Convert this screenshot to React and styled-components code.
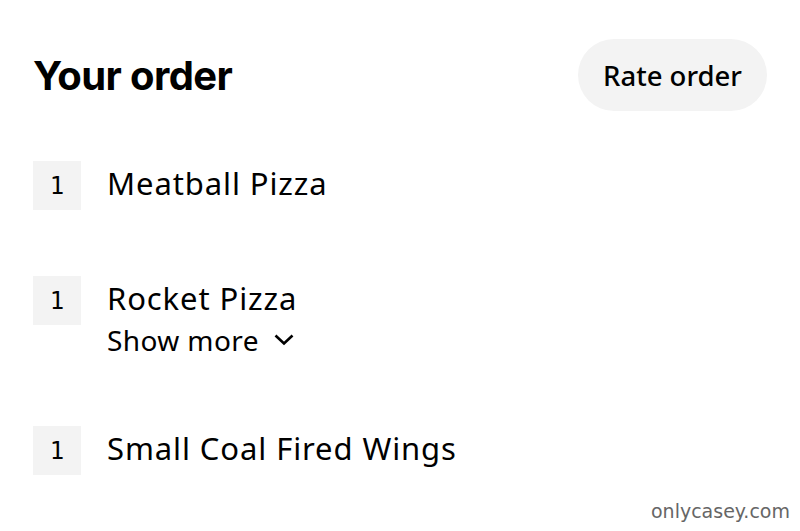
import React from "react";
import styled, { createGlobalStyle } from "styled-components";

const GlobalStyle = createGlobalStyle`
  html, body {
    margin: 0;
    padding: 0;
    background: #fff;
  }
  body {
    font-family: "Noto Sans", "Open Sans", sans-serif;
    color: #000;
  }
`;

const Page = styled.div`
  position: relative;
  width: 800px;
  height: 531px;
  padding: 39px 33px 0 33px;
  box-sizing: border-box;
`;

const Header = styled.div`
  display: flex;
  align-items: center;
  justify-content: space-between;
  height: 72px;
`;

const Title = styled.h1`
  margin: 0;
  font-family: Inter, "Liberation Sans", sans-serif;
  font-size: 40px;
  font-weight: 700;
  letter-spacing: -0.6px;
`;

const RateButton = styled.button`
  height: 72px;
  width: 189px;
  border: none;
  border-radius: 36px;
  background: #f3f3f3;
  font-family: "Noto Sans", sans-serif;
  font-size: 27.5px;
  font-weight: 500;
  color: #000;
  cursor: pointer;
`;

const List = styled.div`
  display: flex;
  flex-direction: column;
  gap: 66px;
  margin-top: 50px;
`;

const Row = styled.div`
  display: flex;
  align-items: flex-start;
  gap: 26px;
`;

const Qty = styled.div`
  width: 48px;
  height: 49px;
  background: #f3f3f3;
  display: flex;
  align-items: center;
  justify-content: center;
  font-family: "DejaVu Sans Mono", monospace;
  font-size: 24px;
  flex-shrink: 0;
`;

const Details = styled.div`
  display: flex;
  flex-direction: column;
`;

const Name = styled.div`
  font-size: 31px;
  letter-spacing: 0.9px;
  line-height: 44px;
`;

const ShowMore = styled.button`
  display: flex;
  align-items: center;
  gap: 15px;
  padding: 0;
  border: none;
  background: none;
  font-family: "Noto Sans", sans-serif;
  font-size: 28px;
  letter-spacing: 0.4px;
  line-height: 40px;
  color: #000;
  cursor: pointer;
`;

const Watermark = styled.div`
  position: absolute;
  right: 10px;
  bottom: 9px;
  font-family: "DejaVu Sans", sans-serif;
  font-size: 19px;
  color: #666;
`;

const items = [
  { qty: 1, name: "Meatball Pizza" },
  { qty: 1, name: "Rocket Pizza", more: true },
  { qty: 1, name: "Small Coal Fired Wings" },
];

const Chevron = () => (
  <svg width="20" height="12" viewBox="0 0 20 12" fill="none">
    <path d="M1.5 1.5 L10 9.5 L18.5 1.5" stroke="#000" strokeWidth="2.6" />
  </svg>
);

const App = () => (
  <>
    <GlobalStyle />
    <Page>
      <Header>
        <Title>Your order</Title>
        <RateButton>Rate order</RateButton>
      </Header>
      <List>
        {items.map((item) => (
          <Row key={item.name}>
            <Qty>{item.qty}</Qty>
            <Details>
              <Name>{item.name}</Name>
              {item.more && (
                <ShowMore>
                  Show more <Chevron />
                </ShowMore>
              )}
            </Details>
          </Row>
        ))}
      </List>
      <Watermark>onlycasey.com</Watermark>
    </Page>
  </>
);

export default App;
